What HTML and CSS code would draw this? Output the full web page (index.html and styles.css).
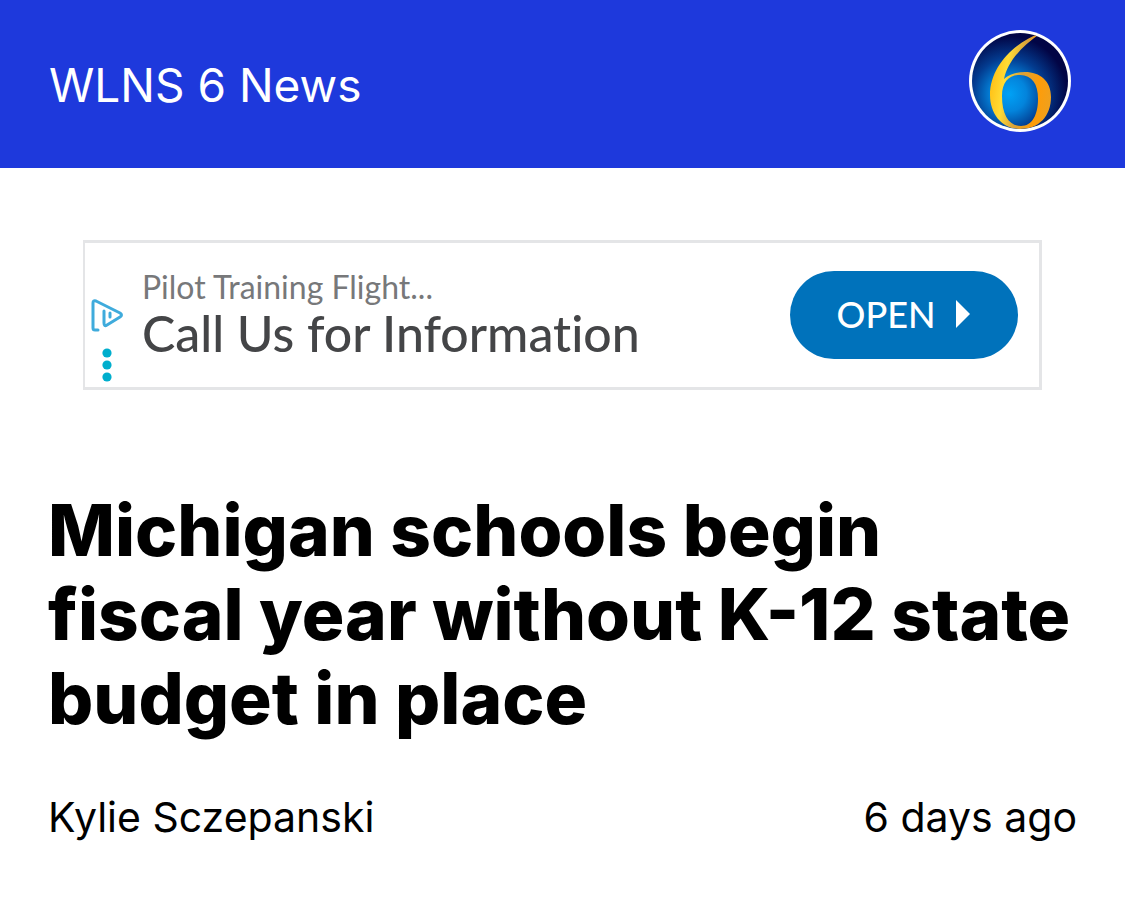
FILE: index.html
```html
<!DOCTYPE html>
<html lang="en">
<head>
    <meta charset="UTF-8">
    <meta name="viewport" content="width=device-width, initial-scale=1.0">
    <title>WLNS 6 News</title>
    <link rel="stylesheet" href="styles.css">
</head>
<body>
    <header class="site-header">
        <span class="site-name">WLNS 6 News</span>
        <svg class="site-logo" viewBox="0 0 102 102" role="img" aria-label="WLNS 6 logo">
            <defs>
                <radialGradient id="globe" gradientUnits="userSpaceOnUse" cx="40" cy="64" r="58">
                    <stop offset="0" stop-color="#00a2f6"/>
                    <stop offset="0.3" stop-color="#0384dc"/>
                    <stop offset="0.62" stop-color="#033c90"/>
                    <stop offset="1" stop-color="#020545"/>
                </radialGradient>
                <linearGradient id="gold" gradientUnits="userSpaceOnUse" x1="20" y1="50" x2="82" y2="60">
                    <stop offset="0" stop-color="#ffbd12"/>
                    <stop offset="0.25" stop-color="#ffdc35"/>
                    <stop offset="0.5" stop-color="#d9a23a"/>
                    <stop offset="0.8" stop-color="#ff9c08"/>
                    <stop offset="1" stop-color="#f0a01c"/>
                </linearGradient>
                <clipPath id="disc"><circle cx="51" cy="51" r="48"/></clipPath>
            </defs>
            <circle cx="51" cy="51" r="51" fill="#fff"/>
            <g clip-path="url(#disc)">
                <rect width="102" height="102" fill="url(#globe)"/>
                <path fill="url(#gold)" fill-rule="evenodd" d="M72 3C46 12 21 36 21 65C21 84 33 99 51 99C70 99 82 86 82 67C82 51 71 42 56 42C48 42 41 44 35 49C38 34 50 18 72 3ZM51 45C63 45 69 54 69 69C69 85 63 96 52 96C40 96 33 85 33 66C33 52 40 45 51 45Z"/>
            </g>
        </svg>
    </header>

    <aside class="ad">
        <div class="ad-choices">
            <svg class="ad-icon" viewBox="0 0 34 36" aria-hidden="true">
                <path d="M8 32H5Q3 32 3 30V5Q3 2 6 3L30 15Q33 17 30 19L17 27Q14 29 14 25V13M20 15V19" fill="none" stroke="#3fabdc" stroke-width="3" stroke-linejoin="round" stroke-linecap="round"/>
            </svg>
            <svg class="ad-dots" viewBox="0 0 10 34" aria-hidden="true">
                <g fill="#00aecd">
                    <circle cx="5" cy="5" r="4.6"/>
                    <circle cx="5" cy="17" r="4.6"/>
                    <circle cx="5" cy="29" r="4.6"/>
                </g>
            </svg>
        </div>
        <div class="ad-text">
            <div class="ad-advertiser">Pilot Training Flight...</div>
            <div class="ad-title">Call Us for Information</div>
        </div>
        <button type="button" class="ad-button">
            OPEN
            <svg class="ad-arrow" viewBox="0 0 14 28" aria-hidden="true"><path d="M0 0L14 14L0 28Z" fill="#fff"/></svg>
        </button>
    </aside>

    <main class="article">
        <h1>Michigan schools begin fiscal year without K-12 state budget in place</h1>
        <div class="article-meta">
            <span>Kylie Sczepanski</span>
            <span>6 days ago</span>
        </div>
    </main>
</body>
</html>
```
FILE: styles.css
```css
body {
    margin: 0;
    background-color: #fff;
    color: #000;
    font-family: Inter, sans-serif;
}
.site-header {
    display: flex;
    justify-content: space-between;
    align-items: center;
    padding: 30px 54px 36px 49px;
    background-color: #1e39dc;
    color: #fff;
}
.site-name {
    padding-top: 8px;
    font-size: 46px;
    line-height: 56px;
}
.site-logo {
    display: block;
    width: 102px;
    height: 102px;
}
.ad {
    display: flex;
    align-items: center;
    box-sizing: border-box;
    max-width: 959px;
    height: 150px;
    margin: 72px auto 98px;
    padding: 0 21px 0 5px;
    border: 3px solid #e4e5e7;
    border-left-width: 2px;
    font-family: Lato, sans-serif;
    font-variant-ligatures: none;
}
.ad-choices {
    display: flex;
    flex-direction: column;
    align-items: center;
    align-self: flex-end;
    gap: 14px;
    width: 34px;
    padding-bottom: 5px;
}
.ad-icon {
    width: 34px;
    height: 36px;
}
.ad-dots {
    width: 10px;
    height: 34px;
}
.ad-text {
    flex: 1;
    padding-left: 18px;
}
.ad-advertiser {
    color: #77787a;
    font-size: 32px;
    line-height: 36px;
}
.ad-title {
    color: #444547;
    font-size: 50px;
    font-weight: 500;
    line-height: 56px;
}
.ad-button {
    display: flex;
    justify-content: center;
    align-items: center;
    gap: 20px;
    width: 228px;
    height: 88px;
    padding: 0 2px 2px 0;
    border: none;
    border-radius: 44px;
    background-color: #0072bb;
    color: #fff;
    font-family: Lato, sans-serif;
    font-size: 36px;
    font-weight: 500;
    cursor: pointer;
}
.ad-arrow {
    width: 14px;
    height: 28px;
}
.article {
    padding: 0 48px 48px;
}
h1 {
    margin: 0 0 52px;
    font-size: 71px;
    font-weight: 800;
    line-height: 84px;
}
.article-meta {
    display: flex;
    justify-content: space-between;
    font-size: 41px;
    line-height: 50px;
}
```
